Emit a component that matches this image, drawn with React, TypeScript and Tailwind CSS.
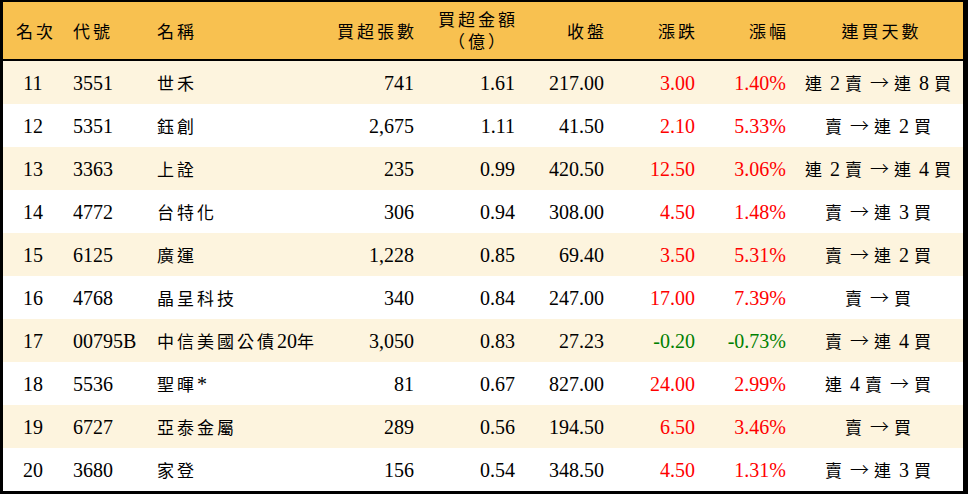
import React from 'react'

type Row = {
  rank: number
  code: string
  name: string
  lots: string
  amount: string
  close: string
  change: string
  pct: string
  streak: string
}

const rows: Row[] = [
  { rank: 11, code: '3551', name: '世禾', lots: '741', amount: '1.61', close: '217.00', change: '3.00', pct: '1.40%', streak: '連 2 賣 → 連 8 買' },
  { rank: 12, code: '5351', name: '鈺創', lots: '2,675', amount: '1.11', close: '41.50', change: '2.10', pct: '5.33%', streak: '賣 → 連 2 買' },
  { rank: 13, code: '3363', name: '上詮', lots: '235', amount: '0.99', close: '420.50', change: '12.50', pct: '3.06%', streak: '連 2 賣 → 連 4 買' },
  { rank: 14, code: '4772', name: '台特化', lots: '306', amount: '0.94', close: '308.00', change: '4.50', pct: '1.48%', streak: '賣 → 連 3 買' },
  { rank: 15, code: '6125', name: '廣運', lots: '1,228', amount: '0.85', close: '69.40', change: '3.50', pct: '5.31%', streak: '賣 → 連 2 買' },
  { rank: 16, code: '4768', name: '晶呈科技', lots: '340', amount: '0.84', close: '247.00', change: '17.00', pct: '7.39%', streak: '賣 → 買' },
  { rank: 17, code: '00795B', name: '中信美國公債20年', lots: '3,050', amount: '0.83', close: '27.23', change: '-0.20', pct: '-0.73%', streak: '賣 → 連 4 買' },
  { rank: 18, code: '5536', name: '聖暉*', lots: '81', amount: '0.67', close: '827.00', change: '24.00', pct: '2.99%', streak: '連 4 賣 → 買' },
  { rank: 19, code: '6727', name: '亞泰金屬', lots: '289', amount: '0.56', close: '194.50', change: '6.50', pct: '3.46%', streak: '賣 → 買' },
  { rank: 20, code: '3680', name: '家登', lots: '156', amount: '0.54', close: '348.50', change: '4.50', pct: '1.31%', streak: '賣 → 連 3 買' },
]

const CJK = /[\u3000-\u9fff\uff00-\uffef]/

// split text so CJK runs get a slightly smaller, spaced-out face (the source uses a Kai font)
function Mixed({ text }: { text: string }) {
  const parts = text.split(/([\u3000-\u9fff\uff00-\uffef]+|→)/).filter(Boolean)
  return (
    <>
      {parts.map((p, i) => {
        if (p === '→')
          return (
            <span key={i} className="font-['Noto_Sans_CJK_TC'] text-[19px] font-light">
              →
            </span>
          )
        if (CJK.test(p))
          return (
            <span key={i} className="text-[17px] tracking-[3px]">
              {p}
            </span>
          )
        return <span key={i}>{p}</span>
      })}
    </>
  )
}

const grid = 'grid grid-cols-[60px_84px_183px_94px_101px_89px_91px_91px_1fr]'

export default function App() {
  return (
    <div
      className="w-[968px] h-[496px] bg-white text-black text-[20px]"
      style={{ fontFamily: '"Liberation Serif", "Noto Sans CJK TC", serif' }}
    >
      <div className="border-l-[3px] border-t-[2px] border-r-[5px] border-b-[3px] border-black">
        <div className={`${grid} h-[59px] items-center bg-[#F8C150] border-b-[2px] border-black`}>
          <div className="text-center pl-[6px]"><Mixed text="名次" /></div>
          <div className="pl-[10px]"><Mixed text="代號" /></div>
          <div className="pl-[10px]"><Mixed text="名稱" /></div>
          <div className="text-right pr-[7px]"><Mixed text="買超張數" /></div>
          <div className="flex justify-end pr-[7px]">
            <div className="text-center leading-[20px]">
              <div><Mixed text="買超金額" /></div>
              <div><Mixed text="（億）" /></div>
            </div>
          </div>
          <div className="text-right pr-[7px]"><Mixed text="收盤" /></div>
          <div className="text-right pr-[7px]"><Mixed text="漲跌" /></div>
          <div className="text-right pr-[7px]"><Mixed text="漲幅" /></div>
          <div className="text-center pl-[4px]"><Mixed text="連買天數" /></div>
        </div>
        {rows.map((r, i) => {
          const down = r.change.startsWith('-')
          const color = down ? 'text-[#008000]' : 'text-[#FF0000]'
          return (
            <div
              key={r.rank}
              className={`${grid} h-[43px] items-center ${i % 2 === 0 ? 'bg-[#FDF4DE]' : 'bg-white'}`}
            >
              <div className="text-center">{r.rank}</div>
              <div className="pl-[10px]">{r.code}</div>
              <div className="pl-[10px] whitespace-nowrap"><Mixed text={r.name} /></div>
              <div className="text-right pr-[10px]">{r.lots}</div>
              <div className="text-right pr-[10px]">{r.amount}</div>
              <div className="text-right pr-[10px]">{r.close}</div>
              <div className={`text-right pr-[10px] ${color}`}>{r.change}</div>
              <div className={`text-right pr-[10px] ${color}`}>{r.pct}</div>
              <div className="text-center whitespace-nowrap"><Mixed text={r.streak} /></div>
            </div>
          )
        })}
      </div>
    </div>
  )
}
